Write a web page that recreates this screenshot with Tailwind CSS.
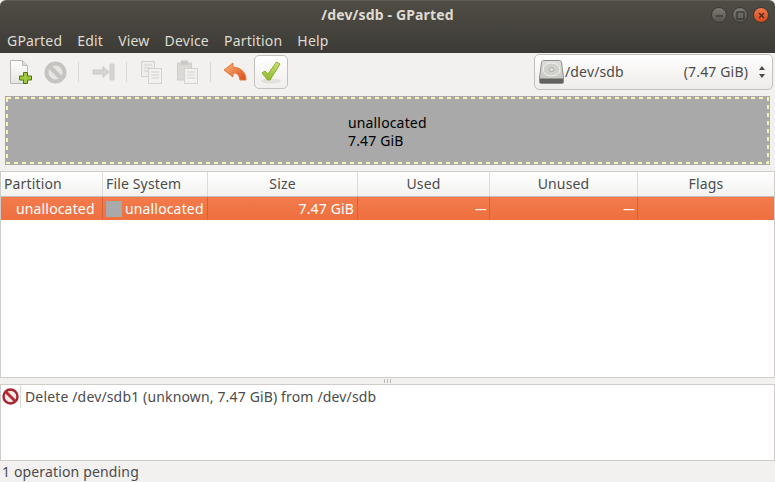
<!DOCTYPE html>
<html lang="en">
<head>
  <meta charset="UTF-8">
  <title>/dev/sdb - GParted</title>
  <script src="https://cdn.jsdelivr.net/npm/@tailwindcss/browser@4"></script>
</head>
<body class="w-[775px] h-[482px] overflow-hidden bg-[#f2f1f0] text-[#4c4c4c] font-['Noto_Sans',sans-serif] text-[14px] leading-[18px] tracking-[0.15px]">

  <!-- Title + menu -->
  <header class="h-[53px] bg-gradient-to-b from-[#4f4c44] via-[#46443d] to-[#3c3b37] border-t border-[#5f5c52] rounded-t-[6px]">
    <div class="h-[27px] relative flex items-center justify-center text-[14px] font-bold text-[#dfdbd2]">
      /dev/sdb - GParted
      <div class="absolute right-[6px] top-[6px] flex gap-[5px]">
        <span class="w-[16px] h-[16px] rounded-full bg-gradient-to-b from-[#7d7b74] to-[#55534c] border border-[#3a3934] flex items-center justify-center">
          <svg width="9" height="9" viewBox="0 0 9 9"><path d="M1 5h7" stroke="#33322e" stroke-width="1.2"/></svg>
        </span>
        <span class="w-[16px] h-[16px] rounded-full bg-gradient-to-b from-[#7d7b74] to-[#55534c] border border-[#3a3934] flex items-center justify-center">
          <svg width="9" height="9" viewBox="0 0 9 9"><rect x="1" y="1" width="7" height="7" fill="none" stroke="#33322e" stroke-width="1.1"/></svg>
        </span>
        <span class="w-[16px] h-[16px] rounded-full bg-gradient-to-b from-[#f0784a] to-[#d5481c] border border-[#3a3934] flex items-center justify-center">
          <svg width="9" height="9" viewBox="0 0 9 9"><path d="M2 2l5 5M7 2l-5 5" stroke="#4a2a1a" stroke-width="1.3"/></svg>
        </span>
      </div>
    </div>
    <nav class="h-[25px] flex items-center pl-[7px] gap-[15px] text-[#dfdbd2] text-[14px] tracking-[0.2px]">
      <span>GParted</span><span>Edit</span><span>View</span><span>Device</span><span>Partition</span><span>Help</span>
    </nav>
  </header>

  <!-- Toolbar -->
  <div class="h-[43px] flex items-center pl-[10px] pr-[2px] pb-[5px]">
    <svg width="22" height="24" viewBox="0 0 22 24" class="mr-[12px]">
      <defs><linearGradient id="doc" x1="0" y1="0" x2="0" y2="1"><stop offset="0" stop-color="#ffffff"/><stop offset="1" stop-color="#e4e4e0"/></linearGradient></defs>
      <path d="M.5.5h12l5 5v18H.5z" fill="url(#doc)" stroke="#b9b9b4"/>
      <path d="M12.500.5v5h5" fill="#dededa" stroke="#b9b9b4"/>
      <path d="M13.500 12.500h4v3.500h4v4h-4v3.500h-4V20h-4v-4h4z" fill="#a2c93e" stroke="#4f7410"/>
    </svg>
    <svg width="23" height="23" viewBox="0 0 23 23" class="mr-[11px]">
      <circle cx="11.500" cy="11.500" r="9" fill="#e6e5e3" stroke="#c6c4c1" stroke-width="4"/>
      <path d="M5 5l13 13" stroke="#c6c4c1" stroke-width="4.400"/>
    </svg>
    <span class="w-px h-[20px] bg-[#d8d6d3] mr-[13px]"></span>
    <svg width="23" height="20" viewBox="0 0 23 20" class="mr-[11px]">
      <path d="M1 8h10V4.500l6 5.500-6 5.500V12H1z" fill="#d6d4d1" stroke="#cccac7" stroke-linejoin="round"/>
      <rect x="18" y="2" width="4" height="16" rx="1" fill="#d6d4d1" stroke="#cccac7"/>
    </svg>
    <span class="w-px h-[20px] bg-[#d8d6d3] mr-[14px]"></span>
    <svg width="21" height="23" viewBox="0 0 21 23" class="mr-[15px]">
      <rect x=".5" y=".5" width="13" height="15" fill="#eeedeb" stroke="#d4d2cf"/>
      <path d="M3 4h8M3 7h8M3 10h8" stroke="#d4d2cf"/>
      <rect x="7.500" y="7.500" width="13" height="15" fill="#f2f1f0" stroke="#d4d2cf"/>
      <path d="M10 11h8M10 14h8M10 17h8" stroke="#d4d2cf"/>
    </svg>
    <svg width="21" height="24" viewBox="0 0 21 24" class="mr-[12px]">
      <rect x=".5" y="3" width="14" height="17" fill="#dbd9d6" stroke="#d0cecb"/>
      <rect x="4" y=".5" width="7" height="4" fill="#cac8c5"/>
      <rect x="7.500" y="8.500" width="13" height="15" fill="#f2f1f0" stroke="#d4d2cf"/>
      <path d="M10 12h8M10 15h8M10 18h8" stroke="#d4d2cf"/>
    </svg>
    <span class="w-px h-[20px] bg-[#d8d6d3] mr-[12px]"></span>
    <svg width="24" height="20" viewBox="0 0 24 20" class="mr-[7px]">
      <defs><linearGradient id="undo" x1="0" y1="0" x2="1" y2="1"><stop offset="0" stop-color="#f9b676"/><stop offset="1" stop-color="#dd4a1c"/></linearGradient></defs>
      <path d="M10 1L1 8l9 7v-4c4 0 6 1.500 7 7h6C23 9.500 17 5.500 10 5z" fill="url(#undo)" stroke="#dd7a3c" stroke-linejoin="round"/>
    </svg>
    <button class="w-[34px] h-[34px] rounded-[5px] border border-[#c4c1bd] bg-gradient-to-b from-white to-[#f1efed] flex items-center justify-center">
      <svg width="22" height="24" viewBox="0 0 22 24">
        <defs><linearGradient id="chk" x1="0" y1="0" x2="0" y2="1"><stop offset="0" stop-color="#d0e272"/><stop offset="1" stop-color="#8fb832"/></linearGradient></defs>
        <ellipse cx="11" cy="21" rx="10" ry="2.500" fill="#e2e0dd"/>
        <path d="M2 13l3-2 3 3L16.500 2 20 4 10 20H7.500z" fill="url(#chk)" stroke="#88ae2c" stroke-linejoin="round"/>
      </svg>
    </button>
    <div class="ml-auto w-[239px] h-[36px] rounded-[5px] border border-[#c4c1bd] bg-gradient-to-b from-white to-[#eeecea] flex items-center pl-[4px] pr-[6px]">
      <svg width="25" height="24" viewBox="0 0 25 24" class="mr-px">
        <defs><linearGradient id="hdd" x1="0" y1="0" x2="0" y2="1"><stop offset="0" stop-color="#dededc"/><stop offset="1" stop-color="#c2c2be"/></linearGradient></defs>
        <path d="M4.500.5h16q1.500 0 2 2l2 15.500v4q0 1.500-1.500 1.500H2Q.5 23.500.5 22v-4l2-15.500q.5-2 2-2z" fill="url(#hdd)" stroke="#8d8d89"/>
        <path d="M1 18.500h23v4.500H1z" fill="#62625e"/>
        <ellipse cx="12.500" cy="9.500" rx="8.500" ry="6.500" fill="#d0d0cc" stroke="#f2f2f0"/>
        <ellipse cx="12.500" cy="9.500" rx="2.500" ry="1.800" fill="#e6e6e4" stroke="#a6a6a2"/>
      </svg>
      <span>/dev/sdb</span>
      <span class="ml-auto">(7.47 GiB)</span>
      <svg width="8" height="14" viewBox="0 0 8 14" class="ml-[10px]">
        <path d="M4 1l3 4H1zM4 13l3-4H1z" fill="#4a4a4a"/>
      </svg>
    </div>
  </div>

  <!-- Partition map -->
  <div class="relative mx-[5px] h-[69px] bg-[#a9a9a9] flex items-center pl-[343px] pt-[2px] text-black">
    <div>unallocated<br>7.47 GiB</div>
    <svg class="absolute inset-0" width="765" height="69">
      <rect x="2" y="2" width="761" height="65" fill="none" stroke="#f6f3b4" stroke-width="2" stroke-dasharray="4 4"/>
    </svg>
  </div>

  <!-- Partition table -->
  <section class="mt-[6px] h-[207px] bg-white border border-[#cfcdca]">
    <div class="grid grid-cols-[102px_105px_150px_132px_148px_1fr] h-[25px] bg-gradient-to-b from-white to-[#f3f2f1] border-b border-[#bfbdba]">
      <div class="pl-[3px] flex items-center border-r border-[#dddbd8]">Partition</div>
      <div class="pl-[3px] flex items-center border-r border-[#dddbd8]">File System</div>
      <div class="flex items-center justify-center border-r border-[#dddbd8]">Size</div>
      <div class="flex items-center justify-center border-r border-[#dddbd8]">Used</div>
      <div class="flex items-center justify-center border-r border-[#dddbd8]">Unused</div>
      <div class="flex items-center justify-center">Flags</div>
    </div>
    <div class="grid grid-cols-[102px_105px_150px_132px_148px_1fr] h-[23px] bg-gradient-to-b from-[#f37b4c] to-[#ee6f3f] text-white">
      <div class="pl-[15px] flex items-center border-r border-[#d5623a]">unallocated</div>
      <div class="pl-[3px] flex items-center gap-[3px] border-r border-[#d5623a]"><span class="w-[16px] h-[16px] bg-[#a9a9a9]"></span>unallocated</div>
      <div class="pr-[3px] flex items-center justify-end border-r border-[#d5623a]">7.47 GiB</div>
      <div class="pr-[3px] flex items-center justify-end border-r border-[#d5623a] tracking-[-0.8px]">---</div>
      <div class="pr-[3px] flex items-center justify-end border-r border-[#d5623a] tracking-[-0.8px]">---</div>
      <div></div>
    </div>
  </section>

  <!-- Pane handle -->
  <div class="h-[6px] flex items-center justify-center gap-[2px]">
    <span class="w-px h-[4px] bg-[#bdbbb8]"></span>
    <span class="w-px h-[4px] bg-[#bdbbb8]"></span>
    <span class="w-px h-[4px] bg-[#bdbbb8]"></span>
  </div>

  <!-- Operations log -->
  <section class="h-[77px] bg-white border border-[#cfcdca]">
    <div class="h-[23px] flex items-center">
      <span class="w-[20px] h-[23px] flex items-center justify-center border-r border-[#dddbd8]">
        <svg width="17" height="17" viewBox="0 0 17 17">
          <circle cx="8.500" cy="8.500" r="7" fill="#f6e8e8" stroke="#a8232c" stroke-width="2.400"/>
          <path d="M3.500 3.500l10 10" stroke="#b52a32" stroke-width="2.800"/>
        </svg>
      </span>
      <span class="pl-[4px]">Delete /dev/sdb1 (unknown, 7.47 GiB) from /dev/sdb</span>
    </div>
  </section>

  <!-- Status bar -->
  <footer class="h-[21px] pl-[2px] flex items-center">1 operation pending</footer>

</body>
</html>
